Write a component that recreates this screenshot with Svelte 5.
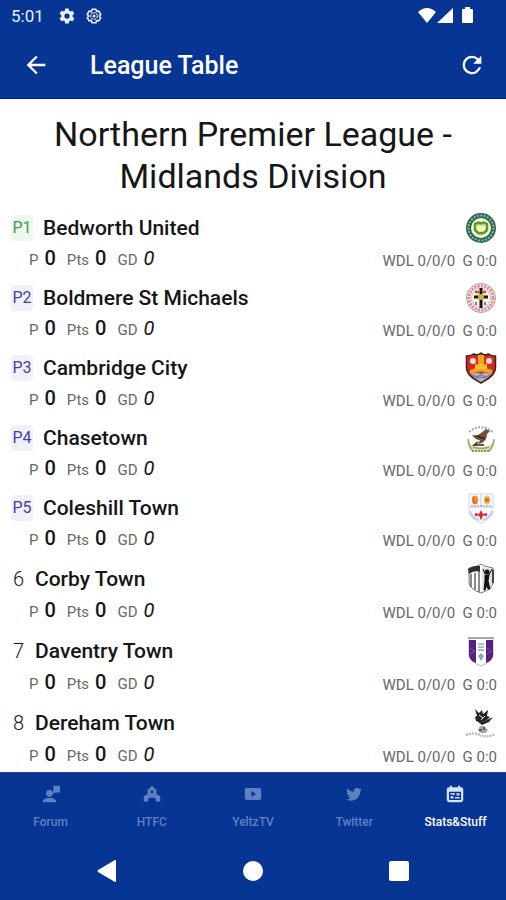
<script lang="ts">
	interface Team {
		pos: number;
		name: string;
		crest: string;
		zone?: 'promotion' | 'playoff';
	}

	const teams: Team[] = [
		{ pos: 1, name: 'Bedworth United', crest: 'bedworth', zone: 'promotion' },
		{ pos: 2, name: 'Boldmere St Michaels', crest: 'boldmere', zone: 'playoff' },
		{ pos: 3, name: 'Cambridge City', crest: 'cambridge', zone: 'playoff' },
		{ pos: 4, name: 'Chasetown', crest: 'chasetown', zone: 'playoff' },
		{ pos: 5, name: 'Coleshill Town', crest: 'coleshill', zone: 'playoff' },
		{ pos: 6, name: 'Corby Town', crest: 'corby' },
		{ pos: 7, name: 'Daventry Town', crest: 'daventry' },
		{ pos: 8, name: 'Dereham Town', crest: 'dereham' }
	];

	const tabs = [
		{ id: 'forum', label: 'Forum' },
		{ id: 'htfc', label: 'HTFC' },
		{ id: 'tv', label: 'YeltzTV' },
		{ id: 'twitter', label: 'Twitter' },
		{ id: 'stats', label: 'Stats&Stuff' }
	];

	let active = $state('stats');
</script>

{#snippet crest(name: string)}
	<svg class="crest" viewBox="0 0 32 32" aria-hidden="true">
		{#if name === 'bedworth'}
			<circle cx="16" cy="16" r="15" fill="#28684f" />
			<circle cx="16" cy="16" r="12.5" fill="none" stroke="#8fb3a2" stroke-width="2" stroke-dasharray="2 1.4" />
			<circle cx="16" cy="16" r="10" fill="#f2f8e9" />
			<path d="M10 12l3.5-1.500 2.500 1 2.500-1 3.500 1.500v6l-3 3h-6l-3-3z" fill="#f4f6c8" stroke="#5c9c1b" stroke-width="2.500" />
			<path d="M12 13h8M13 22l3 1 3-1" stroke="#a9c52b" fill="none" />
		{:else if name === 'boldmere'}
			<circle cx="16" cy="16" r="14.5" fill="#f7e9e9" stroke="#a8a0a0" />
			<circle cx="16" cy="16" r="12" fill="none" stroke="#dc8e8e" stroke-width="3" stroke-dasharray="2 1.3" />
			<circle cx="16" cy="16" r="9.5" fill="#f6f1ec" stroke="#c6b4b4" stroke-width=".7" />
			<path d="M16 6v20M9 15h14" stroke="#151515" stroke-width="3" />
			<circle cx="16" cy="15" r="3" fill="#d8ae2e" />
			<path d="M10 10h4M18 10h3" stroke="#ce4938" stroke-width="2.5" />
			<path d="M11 20v3M20 20v3" stroke="#7b8190" stroke-width="2" />
		{:else if name === 'cambridge'}
			<path d="M1.500 4q4 0 7-2 3.500 2 7.500-1 4 3 7.500 1 3 2 7 2v11c0 8-7 12-14.500 16C8.500 27 1.500 23 1.500 15z" fill="#d52a20" stroke="#3b2225" stroke-width="1.5" />
			<path d="M13 3h6v9h3v6H10v-6h3z" fill="#f4a51c" />
			<path d="M5 18q11-5 22 0v4q-11-5-22 0z" fill="#f4a51c" />
			<path d="M10 17v-4l3 2 3-4 3 4 3-2v4z" fill="#f6c62d" />
			<circle cx="8" cy="9" r="3" fill="#f2dcd9" />
			<circle cx="24" cy="9" r="3" fill="#f2dcd9" />
			<path d="M6 22q5-3 10 0 5-3 10 0-3 4-10 8-7-4-10-8z" fill="#aab0ca" />
			<path d="M7 23l4 2 5-2 5 2 4-2M11 26l5-1 5 1" fill="none" stroke="#6b7294" />
		{:else if name === 'chasetown'}
			<path d="M4 10q12-10 25 1" fill="none" stroke="#a3a9a3" stroke-width="2" stroke-dasharray="2 1.4" />
			<path d="M2 18q0 9 5 12h18q5-3 5-12-4 7-14 7T2 18z" fill="#dfe3bb" />
			<path d="M3 17q1 7 5 12M29 17q-1 7-5 12M8 25q8 3 16 0" stroke="#9aa768" fill="none" stroke-width="1.5" />
			<path d="M7 13q6 1 9-2l5-4 4 2-3 3q0 6-5 9l-4 1 2-4q-5 0-8-5z" fill="#755138" />
			<path d="M12 14l8 3M13 20l-4 3h10" stroke="#33251c" stroke-width="1.5" fill="none" />
			<path d="M7 29h18" stroke="#8d967b" stroke-width="2" stroke-dasharray="2 1" />
		{:else if name === 'coleshill'}
			<path d="M4 2h24v18q0 6-12 11Q4 26 4 20z" fill="#fafafe" stroke="#d3d6e8" />
			<path d="M4 15h24M16 2v13" stroke="#c6cae2" />
			<ellipse cx="10" cy="8" rx="3.2" ry="4.5" fill="#ee9233" />
			<path d="M8 5l2 7" stroke="#cf4a31" />
			<ellipse cx="22" cy="8" rx="3.2" ry="4.5" fill="#ecc344" />
			<path d="M20 6h4v4h-4z" fill="#df7444" />
			<path d="M6 14h20" stroke="#8a92b8" stroke-dasharray="2 1" />
			<path d="M16 18l2 4 4-1v3l-4-.5-2 5-2-5-4 .5v-3l4 1z" fill="#d52b37" />
			<path d="M5 19q1 6 9 9M27 19q-1 6-9 9" fill="none" stroke="#c9cbe5" stroke-width="2" />
		{:else if name === 'corby'}
			<path d="M4 5l9-2 3-2 3 2 9 2v14q0 7-12 11Q4 26 4 19z" fill="#fff" stroke="#777" />
			<path d="M3 6q6-4 12-3v6q-6-2-11 2z" fill="#303030" />
			<path d="M6 11v13M10 10v17M14 9v20" stroke="#666" stroke-width="1.5" />
			<path d="M17 4l10 2v16l-10 6z" fill="#e2e2e2" />
			<circle cx="22" cy="9" r="2.5" fill="#111" />
			<path d="M20 12h4l-1 6 2 8h-2l-1-4-2 5h-1l1-9zM18 6l2 5M27 6l-3 6" fill="#111" stroke="#111" />
			<path d="M28 7v13" stroke="#444" stroke-width="2" />
		{:else if name === 'daventry'}
			<path d="M4 3h24v17q0 6-12 11Q4 26 4 20z" fill="#fff" stroke="#bcb5c3" />
			<path d="M4 5h7v23q-7-3-7-8zM21 5h7v15q0 5-7 8z" fill="#552081" />
			<path d="M3 3h26" stroke="#aaa6ad" stroke-width="2" />
			<path d="M5 13l5 4M22 13l5 4M5 19l5-3M22 19l5-3" stroke="#7d55a2" />
			<path d="M13 9h6M13 12h6M13 15h6" stroke="#b8b8c5" stroke-width="2" />
			<path d="M16 18l3 3-3 5-3-5z" fill="#85aabd" />
		{:else}
			<path d="M10 2l4 4 3-3 1 4 5-4-1 6 3 1-4 4-5 2-5-2-1-4 2-1z" fill="#262626" />
			<path d="M13 15q6 1 9-2l6-3-4 5-7 3z" fill="#262626" />
			<path d="M14 8l4 3M20 9l-4 4" stroke="#ddd" />
			<path d="M13 23l2-4h4l4 4-2 3h-6z" fill="#a9a9a9" />
			<path d="M14 23h3M19 20v3" stroke="#444" stroke-width="1.5" />
			<path d="M1 28q7-3 14 0t15-1" stroke="#bbb" fill="none" stroke-width="2.5" stroke-dasharray="2 1" />
		{/if}
	</svg>
{/snippet}

<div class="app">
	<div class="status-bar">
		<time>5:01</time>
		<svg class="cog" viewBox="0 0 24 24" aria-hidden="true">
			<path
				fill="currentColor"
				d="M19.400 13a7.500 7.500 0 0 0 0-2l2.100-1.600a.5.5 0 0 0 .1-.6l-2-3.500a.5.5 0 0 0-.6-.2l-2.500 1a7.300 7.300 0 0 0-1.700-1l-.4-2.600A.5.5 0 0 0 14 2h-4a.5.5 0 0 0-.5.400L9.100 5a7.700 7.700 0 0 0-1.700 1l-2.500-1a.5.5 0 0 0-.6.200l-2 3.500a.5.5 0 0 0 .1.600L4.600 11a8 8 0 0 0 0 2l-2.200 1.600a.5.5 0 0 0-.1.600l2 3.500c.1.200.4.300.6.200l2.500-1a7.300 7.300 0 0 0 1.700 1l.4 2.700c0 .2.200.4.5.4h4c.2 0 .4-.2.5-.4l.4-2.700a7.700 7.700 0 0 0 1.700-1l2.500 1c.2.100.5 0 .6-.2l2-3.500a.5.500 0 0 0-.1-.6zM12 15.500a3.500 3.500 0 1 1 0-7 3.500 3.500 0 0 1 0 7z"
			/>
		</svg>
		<svg class="cog" viewBox="0 0 24 24" fill="none" stroke="currentColor" stroke-width="2.2" stroke-linejoin="round" aria-hidden="true">
			<path d="M9.500 3h5l1 3 3-.5 2.500 4.300L19 12l2 2.200-2.500 4.300-3-.5-1 3h-5l-1-3-3 .5L3 14.200 5 12 3 9.800l2.500-4.300 3 .5z" />
			<circle cx="12" cy="12" r="4.5" stroke-width="1.5" stroke-dasharray="3 1" />
			<circle cx="12" cy="12" r="2" fill="currentColor" stroke="none" />
		</svg>
		<svg class="signals" viewBox="0 0 56 18" fill="currentColor" aria-hidden="true">
			<path d="M1 5Q10-3 19 5L10 16zM36 1v15H20zM46 2h2V0h5v2h2q1 0 1 1v12q0 1-1 1h-9q-1 0-1-1V3q0-1 1-1z" />
		</svg>
	</div>

	<header>
		<button class="icon-button" aria-label="Back">
			<svg viewBox="0 0 24 24" aria-hidden="true">
				<path fill="currentColor" d="M20 11H7.830l5.590-5.590L12 4l-8 8 8 8 1.410-1.410L7.830 13H20v-2z" />
			</svg>
		</button>
		<h1>League Table</h1>
		<button class="icon-button" aria-label="Refresh">
			<svg viewBox="0 0 24 24" aria-hidden="true">
				<path
					fill="currentColor"
					d="M17.650 6.350A7.960 7.960 0 0 0 12 4a8 8 0 1 0 7.730 10h-2.080A6 6 0 1 1 12 6c1.660 0 3.140.69 4.220 1.780L13 11h7V4l-2.350 2.350z"
				/>
			</svg>
		</button>
	</header>

	<main>
		<h2>Northern Premier League - Midlands Division</h2>
		<ol>
			{#each teams as team (team.pos)}
				<li>
					<div class="team" class:plain={!team.zone}>
						{#if team.zone}
							<span class="badge {team.zone}">P{team.pos}</span>
						{:else}
							<span class="pos">{team.pos}</span>
						{/if}
						<span class="name">{team.name}</span>
						{@render crest(team.crest)}
					</div>
					<div class="stats">
						<span class="stat">P <b>0</b></span>
						<span class="stat">Pts <b>0</b></span>
						<span class="stat">GD <i>0</i></span>
						<span class="record">WDL 0/0/0&nbsp; G 0:0</span>
					</div>
				</li>
			{/each}
		</ol>
	</main>

	<nav class="tabs" aria-label="Sections">
		{#each tabs as tab (tab.id)}
			<button class:active={active === tab.id} onclick={() => (active = tab.id)}>
				<svg viewBox="0 0 24 24" fill="currentColor" aria-hidden="true">
					{#if tab.id === 'forum'}
						<circle cx="10" cy="11" r="4.5" />
						<path d="M1 23q0-6 9-6t9 6zM15 1h9v9h-6l-3 2z" />
					{:else if tab.id === 'htfc'}
						<path
							fill-rule="evenodd"
							d="M12 1l6 6v5l5 3v7h-6v-3a2 2 0 0 0-2-2H9a2 2 0 0 0-2 2v3H1v-7l5-3V7zM12 7a2 2 0 1 0 0 4 2 2 0 0 0 0-4z"
						/>
					{:else if tab.id === 'tv'}
						<path fill-rule="evenodd" d="M4 4h16q3 0 3 3v10q0 3-3 3H4q-3 0-3-3V7q0-3 3-3zm6 4v8l6-4z" />
					{:else if tab.id === 'twitter'}
						<path
							d="M22.460 6c-.77.35-1.600.58-2.460.69a4.300 4.300 0 0 0 1.880-2.380 8.600 8.600 0 0 1-2.720 1.040 4.280 4.280 0 0 0-7.320 3.910A12.200 12.200 0 0 1 3 4.790a4.280 4.280 0 0 0 1.340 5.730 4.200 4.200 0 0 1-1.950-.54c0 2.110 1.480 3.860 3.440 4.260a4.200 4.200 0 0 1-1.940.07 4.290 4.290 0 0 0 4 2.980A8.530 8.530 0 0 1 1.540 19a12.130 12.130 0 0 0 6.580 1.920c7.880 0 12.210-6.540 12.210-12.210l-.01-.56A8.600 8.600 0 0 0 22.460 6z"
						/>
					{:else}
						<path fill-rule="evenodd" d="M5 1h3v2h8V1h3v2q4 0 4 3v13q0 4-4 4H5q-4 0-4-4V6q0-3 4-3zM4 9v10q0 1 1 1h14q1 0 1-1V9z" />
						<path d="M6 11h6v2H6zM14 11h4v3h-4zM6 15h4v3H6zM12 16h6v2h-6z" />
					{/if}
				</svg>
				<span>{tab.label}</span>
			</button>
		{/each}
	</nav>

	<div class="system-nav">
		<button aria-label="System back">
			<svg viewBox="0 0 22 22" aria-hidden="true"><path fill="currentColor" d="M2 10L19 0q1 0 1 1v20q0 1-1 1L2 12q-1-1 0-2z" /></svg>
		</button>
		<button aria-label="Home">
			<svg viewBox="0 0 22 22" aria-hidden="true"><circle cx="11" cy="11" r="10" fill="currentColor" /></svg>
		</button>
		<button aria-label="Recent apps">
			<svg viewBox="0 0 22 22" aria-hidden="true"><rect x="1" y="1" width="20" height="20" rx="2" fill="currentColor" /></svg>
		</button>
	</div>
</div>

<style>
	:global(body) {
		margin: 0;
	}

	.app {
		display: flex;
		flex-direction: column;
		height: 100vh;
		font-family: Roboto, 'Liberation Sans', sans-serif;
		color: #161616;
		background: #fff;
	}

	button {
		border: 0;
		padding: 0;
		background: none;
		color: inherit;
		font: inherit;
		cursor: pointer;
	}

	svg {
		display: block;
		flex: none;
	}

	.status-bar,
	header,
	.tabs,
	.system-nav {
		flex: none;
		color: #fff;
		background: #063594;
	}

	.status-bar {
		display: flex;
		align-items: center;
		height: 32px;
		padding: 0 33px 0 11px;
	}

	time {
		margin-right: 14px;
		font-size: 17px;
		color: #e9effc;
	}

	.cog {
		width: 18px;
		height: 18px;
		margin-right: 9px;
		color: #e9effc;
	}

	.signals {
		width: 56px;
		height: 18px;
		margin-left: auto;
	}

	header {
		display: flex;
		align-items: center;
		height: 67px;
		padding: 0 20px 0 22px;
		box-sizing: border-box;
		border-bottom: 1px solid #001a80;
	}

	.icon-button svg {
		width: 28px;
		height: 28px;
	}

	h1 {
		flex: 1;
		margin: 0 0 0 40px;
		font-size: 25px;
		font-weight: 500;
	}

	main {
		flex: 1;
		min-height: 0;
		overflow-y: auto;
		scrollbar-width: none;
	}

	h2 {
		margin: 0;
		padding: 14px 40px 13px;
		font-size: 34px;
		line-height: 42px;
		font-weight: 400;
		text-align: center;
	}

	ol {
		margin: 0;
		padding: 0;
		list-style: none;
	}

	li {
		padding: 5px 9px 5px 11px;
	}

	.team {
		display: flex;
		align-items: center;
		height: 26px;
	}

	.team.plain {
		height: 28px;
	}

	.badge {
		width: 22px;
		margin-right: 10px;
		border-radius: 4px;
		font-size: 16px;
		line-height: 26px;
		text-align: center;
	}

	.promotion {
		color: #4c9350;
		background: #edf7ed;
	}

	.playoff {
		color: #46419c;
		background: #f0f0fa;
	}

	.pos {
		width: 24px;
		padding-left: 2px;
		box-sizing: border-box;
		font-size: 20px;
		font-weight: 300;
	}

	.name {
		flex: 1;
		font-size: 21px;
		font-weight: 500;
	}

	.crest {
		width: 32px;
		height: 32px;
	}

	.stats {
		display: flex;
		align-items: center;
		gap: 11px;
		height: 34px;
		padding-left: 18px;
		font-size: 15px;
		color: #686868;
	}

	.stat {
		display: flex;
		align-items: baseline;
		gap: 6px;
	}

	.stats b,
	.stats i {
		font-size: 20px;
		color: #161616;
	}

	.stats b {
		font-weight: 500;
	}

	.stats .record {
		margin-left: auto;
		padding-top: 5px;
	}

	.tabs {
		display: flex;
		height: 70px;
		box-sizing: border-box;
		border-top: 1px solid #27459e;
	}

	.tabs button {
		flex: 1;
		display: flex;
		flex-direction: column;
		align-items: center;
		gap: 12px;
		padding-top: 12px;
		font-size: 12px;
		font-weight: 500;
		color: #5f80c3;
	}

	.tabs svg {
		width: 18px;
		height: 18px;
	}

	.tabs .active {
		color: #fff;
	}

	.active svg {
		color: #d5e2fb;
	}

	.system-nav {
		display: flex;
		justify-content: center;
		gap: 124px;
		height: 58px;
	}

	.system-nav svg {
		width: 22px;
		height: 22px;
	}
</style>
